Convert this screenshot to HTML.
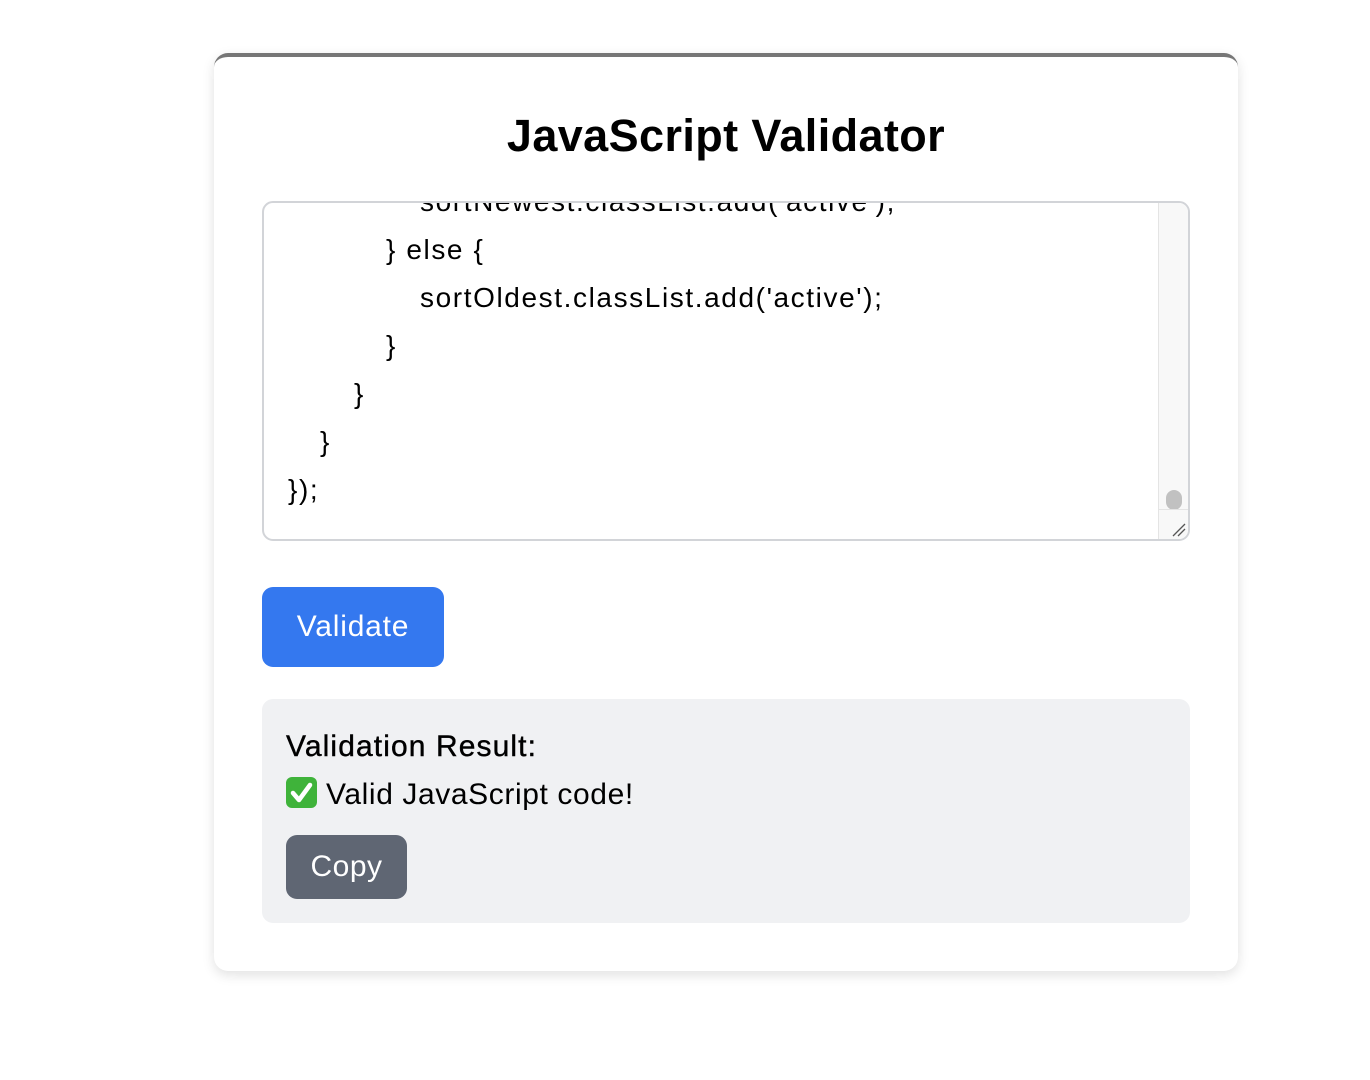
<!DOCTYPE html>
<html><head><meta charset="utf-8"><style>
*{margin:0;padding:0;box-sizing:border-box}
body{width:1370px;height:1080px;background:#fff;font-family:"Liberation Sans",sans-serif;color:#000;position:relative;overflow:hidden}
.card{position:absolute;left:214px;top:53px;width:1024px;height:918px;border-radius:14px;border-top:4px solid #777;background:#fff;box-shadow:0 4px 12px rgba(0,0,0,.12)}
h1{position:absolute;left:214px;top:108px;width:1024px;text-align:center;font-size:45px;font-weight:bold;line-height:56px;letter-spacing:0.4px}
.ta{position:absolute;left:262px;top:201px;width:928px;height:340px;border:2px solid #d2d4d8;border-radius:11px;overflow:hidden;background:#fff}
.code{position:absolute;left:0;top:-25px;font-size:28px;line-height:48px;white-space:pre;letter-spacing:1.6px}
.code div{position:relative}
.sb{position:absolute;right:0;top:0;width:30px;height:100%;background:#f8f8f8;border-left:1px solid #e4e4e4}
.thumb{position:absolute;left:7px;top:287px;width:16px;height:20px;border-radius:8px;background:#c1c1c1}
.corner{position:absolute;left:0;bottom:0;width:30px;height:30px;border-top:1px solid #e4e4e4}
.btn{position:absolute;left:262px;top:587px;width:182px;height:80px;background:#3478ef;border-radius:11px;color:#fff;font-size:30px;line-height:80px;text-align:center;letter-spacing:0.8px}
.res{position:absolute;left:262px;top:699px;width:928px;height:224px;background:#f0f1f3;border-radius:11px}
.rt{position:absolute;left:24px;top:28px;font-size:30px;line-height:40px;letter-spacing:1.1px;-webkit-text-stroke:0.4px #000}
.rv{position:absolute;left:24px;top:76px;font-size:30px;line-height:40px;letter-spacing:0.6px}
.chk{display:inline-block;width:31px;height:31px;background:#3fb33a;border-radius:6px;vertical-align:-4px;margin-right:9px;position:relative}
.copy{position:absolute;left:24px;top:136px;width:121px;height:64px;background:#5f6673;border-radius:11px;color:#fff;font-size:30px;line-height:64px;text-align:center;letter-spacing:0.5px}
</style></head><body>
<div class="card"></div>
<h1>JavaScript Validator</h1>
<div class="ta">
<div class="code"><div style="left:156px">sortNewest.classList.add('active');</div><div style="left:122px">} else {</div><div style="left:156px">sortOldest.classList.add('active');</div><div style="left:122px">}</div><div style="left:90px">}</div><div style="left:56px">}</div><div style="left:24px">});</div></div>
<div class="sb"><div class="thumb"></div><div class="corner"><svg width="30" height="30"><path d="M14 26L26 14M19 26L26 19" stroke="#555" stroke-width="1.3"/></svg></div></div>
</div>
<div class="btn">Validate</div>
<div class="res">
<div class="rt">Validation Result:</div>
<div class="rv"><span class="chk"><svg width="31" height="31" style="position:absolute;left:0;top:0"><path d="M7 16l6 7 11-15" stroke="#fff" stroke-width="4.5" fill="none" stroke-linecap="round" stroke-linejoin="round"/></svg></span>Valid JavaScript code!</div>
<div class="copy">Copy</div>
</div>
</body></html>
